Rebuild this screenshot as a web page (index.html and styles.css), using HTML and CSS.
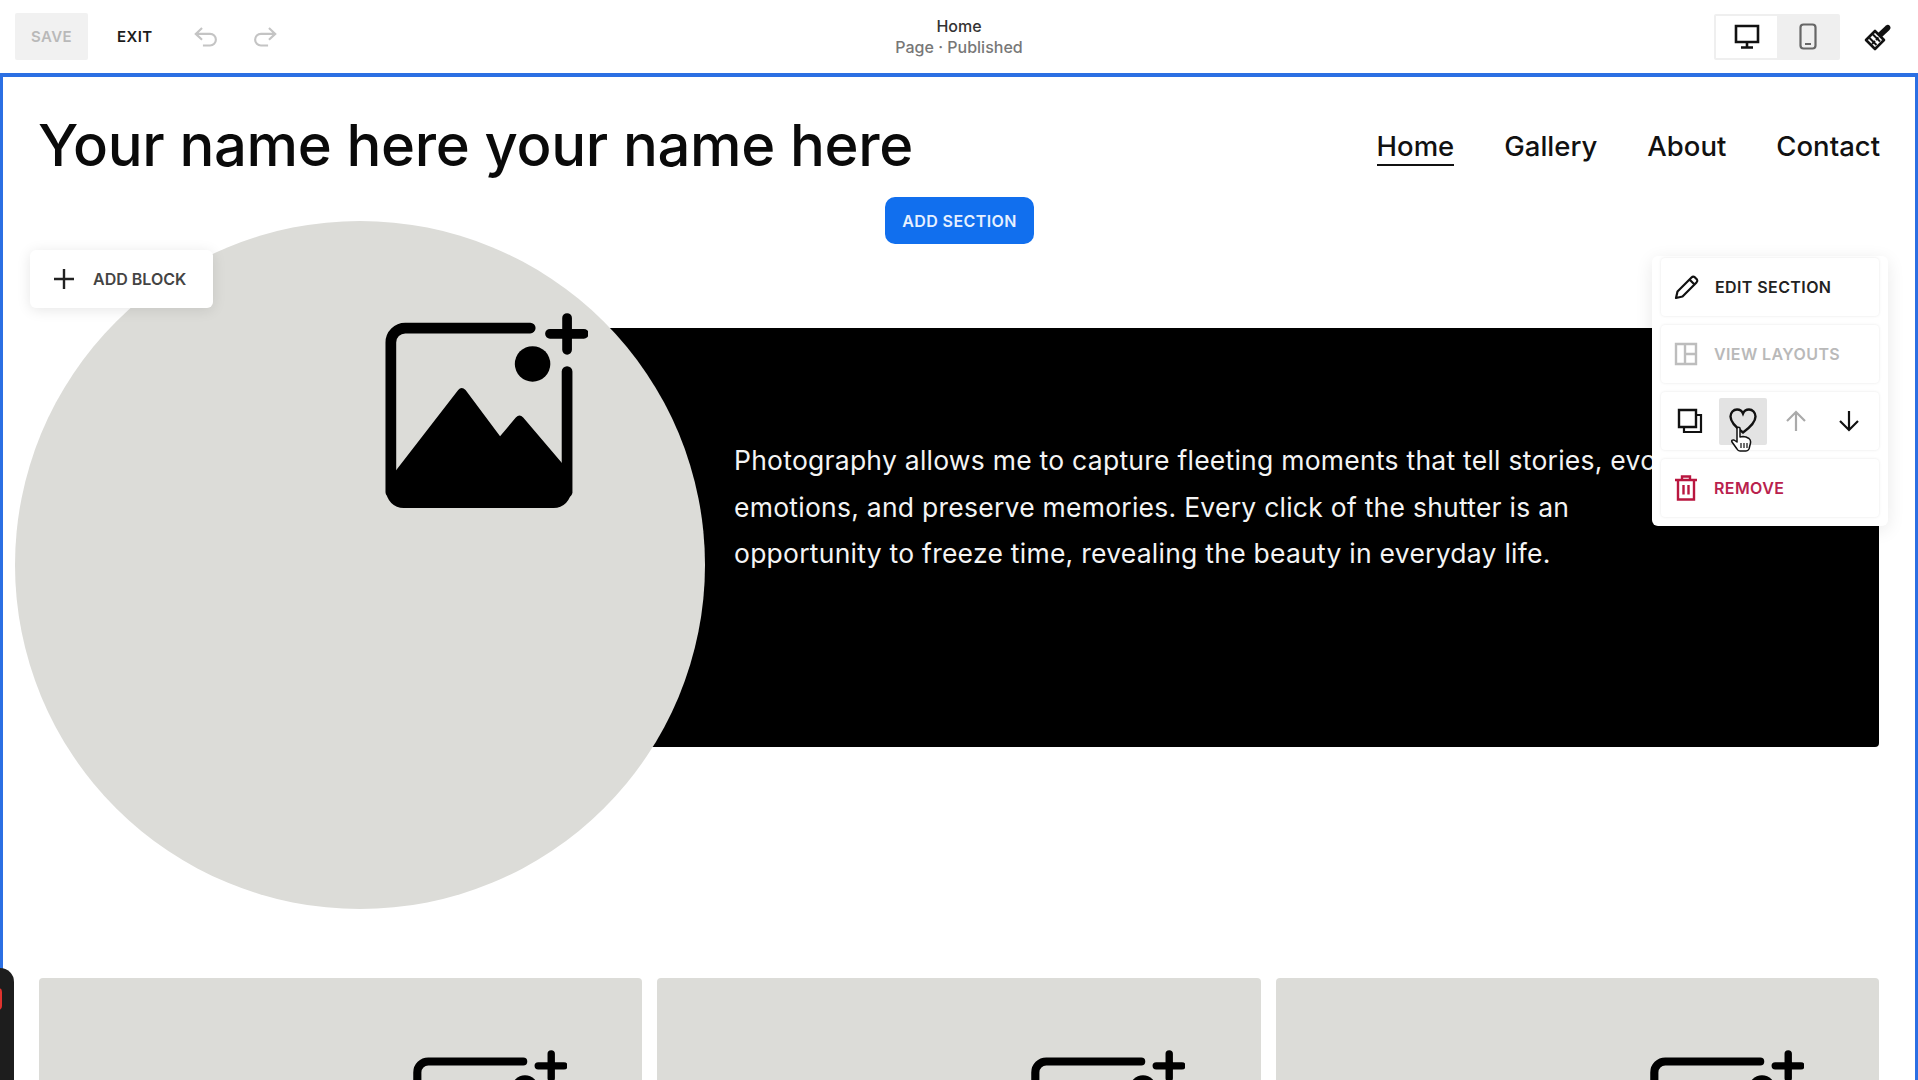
FILE: index.html
```html
<!DOCTYPE html>
<html lang="en">
<head>
<meta charset="utf-8">
<title>Home</title>
<link rel="stylesheet" href="styles.css">
</head>
<body>
<svg class="defs" width="0" height="0" aria-hidden="true">
  <symbol id="placeholder" viewBox="75 40 605 585">
    <path d="M508 85H135a43 43 0 0 0-43 43V575" fill="none" stroke="#000" stroke-width="32" stroke-linecap="round"/>
    <path d="M618 215V575" fill="none" stroke="#000" stroke-width="32" stroke-linecap="round"/>
    <path d="M80 545 293 270Q303 257 315 270L418 408 465 352Q476 340 487 352L630 520V570A52 52 0 0 1 578 622H130A52 52 0 0 1 78 570Z" fill="#000"/>
    <circle cx="515" cy="192" r="53" fill="#000"/>
    <path d="M618 55V150M567 102H668" fill="none" stroke="#000" stroke-width="29" stroke-linecap="round"/>
  </symbol>
</svg>

<header class="toolbar">
  <div class="tool-left">
    <button class="save">SAVE</button>
    <button class="exit">EXIT</button>
    <svg class="hist" width="25" height="24" viewBox="0 0 28 26"><path d="M9 3 2 9.500 9 16M2.500 9.500H18a6.500 6.500 0 0 1 0 13H10" fill="none" stroke="#c4c4c4" stroke-width="2.400"/></svg>
    <svg class="hist" width="25" height="24" viewBox="0 0 28 26"><path d="M19 3 26 9.500 19 16M25.500 9.500H10a6.500 6.500 0 0 0 0 13H18" fill="none" stroke="#c4c4c4" stroke-width="2.400"/></svg>
  </div>
  <div class="tool-center">
    <div class="page-name">Home</div>
    <div class="page-state">Page · Published</div>
  </div>
  <div class="tool-right">
    <div class="devices">
      <div class="device active">
        <svg width="26" height="25" viewBox="0 0 26 25"><path d="M2 2H24V18H2ZM13 18V23M7 23.500H19" fill="none" stroke="#111" stroke-width="2.600"/></svg>
      </div>
      <div class="device">
        <svg width="18" height="27" viewBox="0 0 18 27"><rect x="1.500" y="1.500" width="15" height="24" rx="3" fill="none" stroke="#666" stroke-width="2.200"/><path d="M6 21H12" stroke="#666" stroke-width="2"/></svg>
      </div>
    </div>
    <svg class="brush" width="30" height="30" viewBox="0 0 30 30"><path d="M3 18 12 9 21 18 12 27Z" fill="#fff" stroke="#111" stroke-width="2.600" stroke-linejoin="round"/><path d="M6.500 16 13.500 23M10 12.500 17 19.500M9 22 12 19M13 18 15.500 15.500" stroke="#111" stroke-width="2"/><path d="M15 11 23 3.500Q25 2 27 4 28.500 6 26.500 8L19 15Z" fill="#111"/></svg>
  </div>
</header>

<main class="frame">
  <div class="site-header">
    <h1 class="site-title">Your name here your name here</h1>
    <nav class="site-nav">
      <a class="nav-link current">Home</a>
      <a class="nav-link">Gallery</a>
      <a class="nav-link">About</a>
      <a class="nav-link">Contact</a>
    </nav>
  </div>

  <section class="hero">
    <div class="band">
      <p class="band-text">Photography allows me to capture fleeting moments that tell stories, evoke<br>emotions, and preserve memories. Every click of the shutter is an<br>opportunity to freeze time, revealing the beauty in everyday life.</p>
    </div>
    <div class="circle">
      <svg class="ph-large"><use href="#placeholder"/></svg>
    </div>
  </section>

  <section class="cards">
    <div class="card"><svg class="ph-small"><use href="#placeholder"/></svg></div>
    <div class="card"><svg class="ph-small"><use href="#placeholder"/></svg></div>
    <div class="card"><svg class="ph-small"><use href="#placeholder"/></svg></div>
  </section>
</main>

<button class="add-section">ADD SECTION</button>

<button class="add-block">
  <svg width="24" height="24" viewBox="0 0 24 24"><path d="M12 2V22M2 12H22" stroke="#222" stroke-width="2.400"/></svg>
  <span>ADD BLOCK</span>
</button>

<aside class="panel">
  <div class="row">
    <svg width="26" height="26" viewBox="0 0 26 26"><path d="M2 24 3.500 17.500 17.500 3.500Q19 2 20.500 3L23 5.500Q24 7 22.500 8.500L8.500 22.500ZM15.500 5.500 20.500 10.500" fill="none" stroke="#111" stroke-width="2.200" stroke-linejoin="round"/></svg>
    <span>EDIT SECTION</span>
  </div>
  <div class="row muted">
    <svg width="24" height="24" viewBox="0 0 24 24"><path d="M2 2H22V22H2ZM11 2V22M11 12H22" fill="none" stroke="#bdbdbd" stroke-width="2.400"/></svg>
    <span>VIEW LAYOUTS</span>
  </div>
  <div class="row icons">
    <div class="icon-cell">
      <svg width="26" height="26" viewBox="0 0 26 26"><path d="M7 7V24H24V7Z" fill="none" stroke="#111" stroke-width="2.200"/><path d="M2 2H19V19H2Z" fill="#fff" stroke="#111" stroke-width="2.400"/></svg>
    </div>
    <div class="icon-cell hover">
      <svg width="28" height="26" viewBox="0 0 28 26"><path d="M14 24.500C5 18 1.500 13.500 1.500 8.500 1.500 4.500 4.500 1.500 8 1.500 10.500 1.500 13 3 14 5.500 15 3 17.500 1.500 20 1.500 23.500 1.500 26.500 4.500 26.500 8.500 26.500 13.500 23 18 14 24.500Z" fill="none" stroke="#111" stroke-width="2.400"/></svg>
    </div>
    <div class="icon-cell">
      <svg width="22" height="22" viewBox="0 0 22 22"><path d="M11 21V2M2 11 11 2 20 11" fill="none" stroke="#aaa" stroke-width="2.200"/></svg>
    </div>
    <div class="icon-cell">
      <svg width="22" height="22" viewBox="0 0 22 22"><path d="M11 1V20M2 11 11 20 20 11" fill="none" stroke="#111" stroke-width="2.200"/></svg>
    </div>
  </div>
  <div class="row danger">
    <svg width="24" height="26" viewBox="0 0 24 26"><path d="M1 5H23M8 5V1.500H16V5M4 5V24.500H20V5M9.500 10V19.500M14.500 10V19.500" fill="none" stroke="#b9163f" stroke-width="2.400"/></svg>
    <span>REMOVE</span>
  </div>
</aside>

<svg class="hand" width="22" height="26" viewBox="0 0 22 26"><path d="M7 2Q8.500 .5 10 2V11L13 10.500 16 11 19 12.500Q21 14 20.500 17L19 23Q18 25 16 25H10Q8 25 7 23L2 16Q1 13.500 4 14L7 16Z" fill="#fff" stroke="#111" stroke-width="1.500" stroke-linejoin="round"/><path d="M11 17V22M14 17V22M17 17V22" stroke="#111" stroke-width="1.200"/></svg>

<div class="dock"><span class="dock-dot"></span></div>
</body>
</html>
```

FILE: styles.css
```css
* { box-sizing: border-box; }
html, body { margin: 0; height: 100%; }
body {
  height: 1080px;
  overflow: hidden;
  background: #fff;
  font-family: Inter, "Liberation Sans", sans-serif;
  color: #111;
  position: relative;
}
button { font-family: inherit; border: 0; cursor: pointer; }
.defs { position: absolute; }

/* Toolbar */
.toolbar {
  height: 73px;
  display: grid;
  grid-template-columns: 1fr auto 1fr;
  align-items: center;
  padding: 0 15px;
  background: #fff;
}
.tool-left { display: flex; align-items: center; }
.save {
  width: 73px;
  height: 47px;
  background: #f1f1f1;
  color: #b9b9b9;
  font-size: 15px;
  font-weight: 600;
  letter-spacing: .4px;
  border-radius: 2px;
  padding: 0;
}
.exit {
  margin-left: 29px;
  padding: 0;
  background: none;
  color: #1c1c1c;
  font-size: 15px;
  font-weight: 600;
  letter-spacing: .4px;
}
.hist { margin-left: 41px; }
.hist + .hist { margin-left: 33px; }
.tool-center { text-align: center; }
.page-name { font-size: 16px; font-weight: 500; color: #333; line-height: 20px; }
.page-state { font-size: 16px; font-weight: 500; color: #777; line-height: 21px; margin-top: 1px; }
.tool-right { display: flex; justify-content: flex-end; align-items: center; gap: 23px; padding-right: 10px; }
.devices { display: flex; height: 46px; width: 126px; background: #efefef; border-radius: 2px; padding: 2px; }
.device { flex: 1; display: flex; align-items: center; justify-content: center; }
.device.active { background: #fff; }
.brush { display: block; }

/* Site frame */
.frame {
  height: 1007px;
  border: solid #2b6fe3;
  border-width: 4px 3px 0;
  overflow: hidden;
  background: #fff;
}
.site-header {
  display: flex;
  align-items: center;
  justify-content: space-between;
  height: 144px;
  padding: 0 35px 8px;
}
.site-title { margin: 0; font-size: 58px; font-weight: 500; letter-spacing: -.35px; color: #0a0a0a; white-space: nowrap; }
.site-nav { display: flex; gap: 50px; margin-top: 5px; }
.nav-link { font-size: 27.500px; font-weight: 500; color: #111; padding-bottom: 1px; }
.nav-link.current { border-bottom: 2px solid #111; }

/* Hero */
.hero { display: grid; height: 688px; }
.band, .circle { grid-area: 1 / 1; }
.band {
  margin: 107px 36px 162px 597px;
  background: #000;
  border-radius: 0 0 4px 0;
  padding: 109px 0 0 134px;
  overflow: hidden;
}
.band-text { margin: 0; color: #f4f4f4; font-size: 26.500px; letter-spacing: .25px; line-height: 46.500px; white-space: nowrap; }
.circle {
  margin-left: 12px;
  width: 690px;
  height: 688px;
  border-radius: 50%;
  background: #dcdcd8;
  padding: 92px 0 0 370px;
}
.ph-large { display: block; width: 203px; height: 196px; }

/* Cards */
.cards {
  display: grid;
  grid-template-columns: repeat(3, 1fr);
  gap: 15px;
  margin-top: 69px;
  padding: 0 36px;
}
.card {
  height: 240px;
  background: #dcdcd8;
  border-radius: 4px;
  padding: 72px 0 0 374px;
}
.ph-small { display: block; width: 154px; height: 149px; }

/* Overlays */
.add-section {
  position: absolute;
  left: 885px;
  top: 197px;
  width: 149px;
  height: 47px;
  background: #116fee;
  color: #e6f0ff;
  border-radius: 10px;
  font-size: 16px;
  font-weight: 600;
  letter-spacing: .4px;
  padding: 0;
}
.add-block {
  position: absolute;
  left: 30px;
  top: 250px;
  width: 183px;
  height: 58px;
  display: flex;
  align-items: center;
  gap: 17px;
  padding: 0 0 0 22px;
  background: #fff;
  border-radius: 6px;
  box-shadow: 0 2px 14px rgba(0,0,0,.1);
  font-size: 16px;
  font-weight: 600;
  color: #444;
}
.add-block svg { flex: none; }
.panel {
  position: absolute;
  left: 1652px;
  top: 256px;
  width: 236px;
  height: 270px;
  padding: 2px 9px 0 9px;
  display: flex;
  flex-direction: column;
  gap: 9px;
  background: #fff;
  border-radius: 6px;
  box-shadow: 0 4px 18px rgba(0,0,0,.09);
}
.row {
  height: 58px;
  display: flex;
  align-items: center;
  gap: 15px;
  padding-left: 13px;
  border-radius: 4px;
  box-shadow: 0 0 3px rgba(0,0,0,.1);
  font-size: 16px;
  font-weight: 600;
  letter-spacing: .4px;
  color: #222;
}
.row svg { flex: none; }
.row.muted { color: #b9b9b9; }
.row.muted svg { margin-right: 1px; }
.row.danger { color: #b9214d; }
.row.danger svg { margin-right: 1px; }
.row.icons { gap: 5px; padding-left: 5px; }
.icon-cell { width: 48px; height: 47px; display: flex; align-items: center; justify-content: center; }
.icon-cell.hover { background: #e3e3e3; border-radius: 2px; }
.hand { position: absolute; left: 1730px; top: 426px; }
.dock {
  position: absolute;
  left: -20px;
  top: 968px;
  width: 34px;
  height: 130px;
  border-radius: 14px;
  background: #1d1d1d;
}
.dock-dot {
  position: absolute;
  left: 14px;
  top: 20px;
  width: 8px;
  height: 22px;
  border-radius: 4px;
  background: #e0332e;
}
```
